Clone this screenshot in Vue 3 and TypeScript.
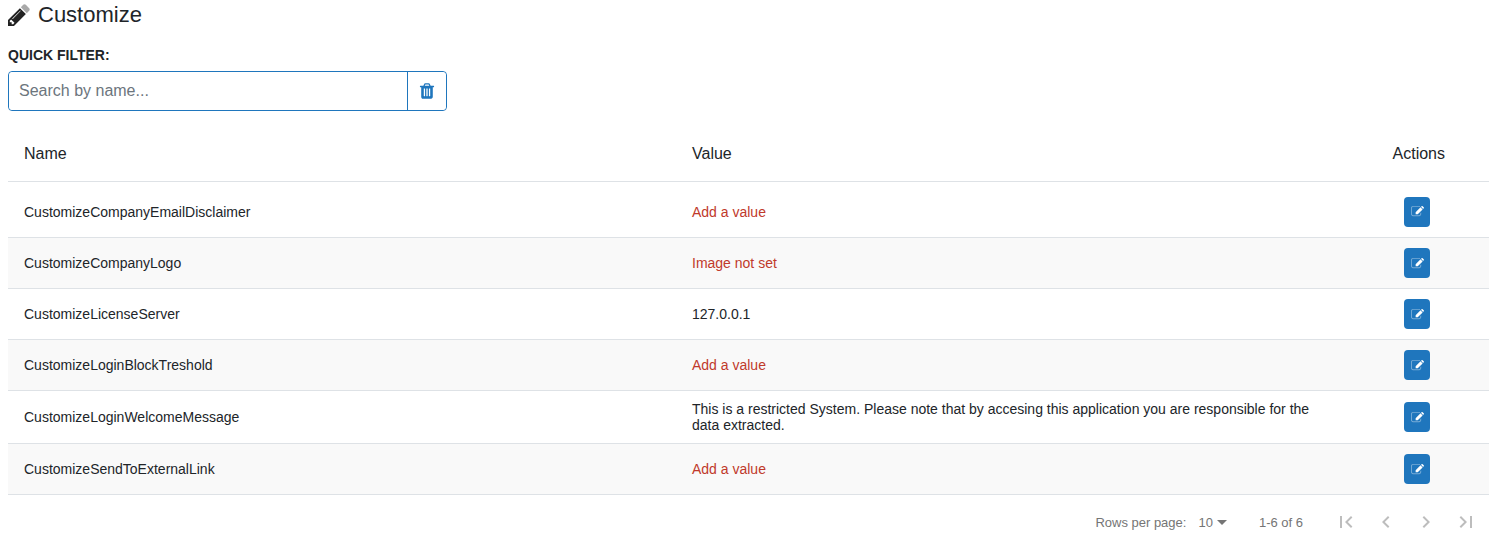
<script setup lang="ts">
interface Row { name: string; value: string; missing: boolean }
const rows: Row[] = [
  { name: 'CustomizeCompanyEmailDisclaimer', value: 'Add a value', missing: true },
  { name: 'CustomizeCompanyLogo', value: 'Image not set', missing: true },
  { name: 'CustomizeLicenseServer', value: '127.0.0.1', missing: false },
  { name: 'CustomizeLoginBlockTreshold', value: 'Add a value', missing: true },
  { name: 'CustomizeLoginWelcomeMessage', value: 'This is a restricted System. Please note that by accesing this application you are responsible for the data extracted.', missing: false },
  { name: 'CustomizeSendToExternalLink', value: 'Add a value', missing: true },
]
</script>

<template>
  <div class="page">
    <h1 class="title">
      <svg class="pencil" viewBox="128 128 1536 1536" width="22" height="22">
        <path fill="#222" d="M491 1536l91-91-235-235-91 91v107h128v128h107zm523-928q0-22-22-22-10 0-17 7l-542 542q-7 7-7 17 0 22 22 22 10 0 17-7l542-542q7-7 7-17zm-54-192l416 416-832 832h-416v-416z" />
        <path fill="#a9a9a9" d="M1643 512q0 53-37 90l-166 166-416-416 166-165q36-38 90-38 53 0 91 38l235 234q37 39 37 91z" />
      </svg>
      <span>Customize</span>
    </h1>
    <div class="filter-label">QUICK FILTER:</div>
    <div class="filter">
      <input class="filter-input" type="text" placeholder="Search by name..." />
      <button class="filter-clear" type="button" aria-label="Clear">
        <svg viewBox="0 0 1792 1792" width="18" height="18">
          <path fill="#1f76bd" d="M704 1376v-704q0-14-9-23t-23-9h-64q-14 0-23 9t-9 23v704q0 14 9 23t23 9h64q14 0 23-9t9-23zm256 0v-704q0-14-9-23t-23-9h-64q-14 0-23 9t-9 23v704q0 14 9 23t23 9h64q14 0 23-9t9-23zm256 0v-704q0-14-9-23t-23-9h-64q-14 0-23 9t-9 23v704q0 14 9 23t23 9h64q14 0 23-9t9-23zm-544-992h448l-48-117q-7-9-17-11h-317q-10 2-17 11zm928 32v64q0 14-9 23t-23 9h-96v948q0 83-47 143.5t-113 60.5h-832q-66 0-113-58.5t-47-141.5v-952h-96q-14 0-23-9t-9-23v-64q0-14 9-23t23-9h309l70-167q15-37 54-63t79-26h320q40 0 79 26t54 63l70 167h309q14 0 23 9t9 23z" />
        </svg>
      </button>
    </div>

    <table class="grid">
      <colgroup>
        <col class="col-name" />
        <col class="col-value" />
        <col class="col-actions" />
      </colgroup>
      <thead>
        <tr>
          <th>Name</th>
          <th>Value</th>
          <th class="actions-head">Actions</th>
        </tr>
      </thead>
      <tbody>
        <tr v-for="(row, i) in rows" :key="row.name" :class="{ odd: i % 2 === 1, first: i === 0, tall: i === 4 }">
          <td>{{ row.name }}</td>
          <td :class="{ missing: row.missing }"><div class="value">{{ row.value }}</div></td>
          <td class="actions">
            <button class="edit" type="button" aria-label="Edit">
              <svg viewBox="0 0 1792 1792" width="13" height="13">
                <path fill="#fff" fill-opacity=".4" d="M1408 1058v190q0 119-84.5 203.5t-203.5 84.5h-832q-119 0-203.5-84.5t-84.5-203.5v-832q0-119 84.5-203.5t203.5-84.5h832q63 0 117 25 15 7 18 23 3 17-9 29l-49 49q-14 14-32 8-23-6-45-6h-832q-66 0-113 47t-47 113v832q0 66 47 113t113 47h832q66 0 113-47t47-113v-126q0-13 9-22l64-64q15-15 35-7t20 29z" />
                <path fill="#fff" d="M1312 320l288 288-672 672h-288v-288zM1756 452l-92 92-288-288 92-92q28-28 68-28t68 28l152 152q28 28 28 68t-28 68z" />
              </svg>
            </button>
          </td>
        </tr>
      </tbody>
    </table>

    <div class="pager">
      <span class="rows-label">Rows per page:</span>
      <span class="rows-select">10<i class="caret"></i></span>
      <span class="range">1-6 of 6</span>
      <div class="pager-buttons">
        <svg viewBox="0 0 24 24" width="24" height="24"><path d="M18.4 16.6 13.8 12l4.6-4.6L17 6l-6 6 6 6zM6 6h2v12H6z" /></svg>
        <svg viewBox="0 0 24 24" width="24" height="24"><path d="M15.4 7.4 14 6l-6 6 6 6 1.4-1.4-4.6-4.6z" /></svg>
        <svg viewBox="0 0 24 24" width="24" height="24"><path d="M10 6 8.6 7.4l4.6 4.6-4.6 4.6L10 18l6-6z" /></svg>
        <svg viewBox="0 0 24 24" width="24" height="24"><path d="M5.6 7.4 10.2 12l-4.6 4.6L7 18l6-6-6-6zM16 6h2v12h-2z" /></svg>
      </div>
    </div>
  </div>
</template>

<style scoped>
.page {
  box-sizing: border-box;
  width: 1489px;
  height: 538px;
  padding-left: 8px;
  overflow: hidden;
  font-family: "Liberation Sans", Arial, sans-serif;
  color: #212529;
}
.title {
  display: flex;
  align-items: center;
  gap: 8px;
  height: 30px;
  margin: 0;
  font-size: 22px;
  font-weight: 400;
  line-height: 30px;
}
.pencil { display: block; }
.filter-label {
  margin-top: 17px;
  font-size: 14px;
  font-weight: 700;
  line-height: 16px;
}
.filter {
  display: flex;
  width: 439px;
  height: 40px;
  margin-top: 8px;
  box-sizing: border-box;
  border: 1px solid #1f76bd;
  border-radius: 4px;
}
.filter-input {
  flex: 1;
  min-width: 0;
  padding: 0 10px;
  border: 0;
  border-right: 1px solid #1f76bd;
  border-radius: 4px 0 0 4px;
  outline: 0;
  background: #fff;
  font: 16px "Liberation Sans", Arial, sans-serif;
  color: #495057;
}
.filter-input::placeholder { color: #6c757d; opacity: 1; }
.filter-clear {
  display: flex;
  align-items: center;
  justify-content: center;
  width: 38px;
  padding: 0;
  border: 0;
  background: #fff;
  border-radius: 0 4px 4px 0;
}
.grid {
  width: 1481px;
  margin-top: 14px;
  border-collapse: collapse;
  table-layout: fixed;
  font-size: 14px;
}
.col-name { width: 668px; }
.col-actions { width: 140px; }
th {
  height: 54px;
  padding: 2px 16px 0;
  border-bottom: 1px solid #dee2e6;
  text-align: left;
  font-size: 16px;
  font-weight: 400;
}
th.actions-head { padding: 2px 44px 0 0; text-align: right; }
td {
  height: 50px;
  padding: 0 16px;
  border-bottom: 1px solid #dee2e6;
  line-height: 14px;
}
tr.first td { height: 51px; padding-top: 4px; }
tr.tall td { height: 52px; }
tr.odd td { background: #f9f9f9; }
.value { max-width: 640px; line-height: 16px; }
.missing { color: #c0392b; }
td.actions { padding-left: 0; padding-right: 59px; text-align: right; }
.edit {
  display: inline-flex;
  align-items: center;
  justify-content: center;
  width: 26px;
  height: 30px;
  padding: 0;
  border: 0;
  border-radius: 4px;
  background: #1f76bd;
  vertical-align: middle;
}
.pager {
  display: flex;
  align-items: center;
  justify-content: flex-end;
  height: 54px;
  font-size: 13px;
  color: #757575;
}
.rows-label { margin-right: 12px; }
.rows-select { display: flex; align-items: center; }
.caret {
  width: 0;
  height: 0;
  margin-left: 4px;
  border-left: 5px solid transparent;
  border-right: 5px solid transparent;
  border-top: 5px solid #757575;
}
.range { margin-left: 32px; margin-right: 31px; }
.pager-buttons { display: flex; gap: 16px; padding-right: 11px; }
.pager-buttons svg { fill: #bdbdbd; display: block; }
</style>
